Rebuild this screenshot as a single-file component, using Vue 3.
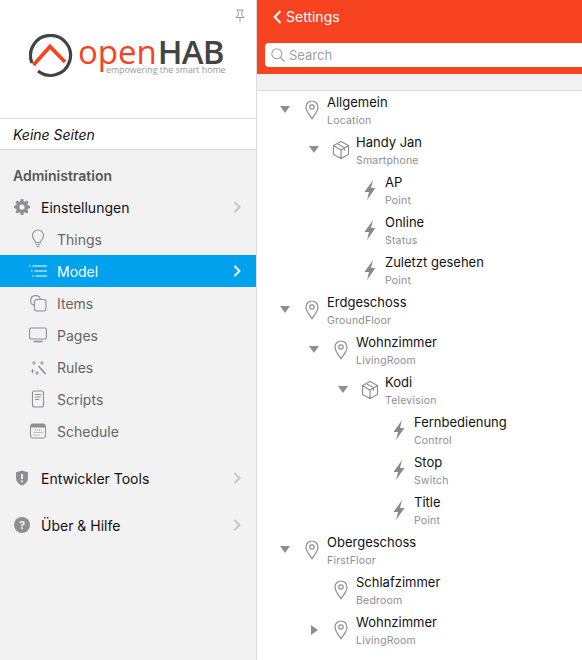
<template>
  <div class="app">
    <aside class="sidebar">
      <div class="logo-panel">
        <svg class="thumbtack" viewBox="0 0 12 14" width="12" height="14">
          <path d="M2.500 1h7M3.800 1l.5 5L2 8.500h8L7.700 6l.5-5M6 8.500v5" fill="none" stroke="#9a9a9a" stroke-width="1" />
        </svg>
        <div class="logo">
          <svg class="logo-mark" viewBox="0 0 44 44" width="44" height="44">
            <path d="M3 29A20 20 0 1 1 9 37" fill="none" stroke="#444" stroke-width="3.200" />
            <path d="M4.500 31L21 12.500 36 28" fill="none" stroke="#f7431f" stroke-width="3.800" />
          </svg>
          <div class="logo-text">
            <div class="logo-name"><span class="open">open</span><span class="hab">HAB</span></div>
            <div class="tagline">empowering the smart home</div>
          </div>
        </div>
      </div>
      <div class="pages">Keine Seiten</div>

      <div class="section-title">Administration</div>
      <div class="menu-row main">
        <svg class="main-icon" viewBox="0 0 16 16" width="16" height="16">
          <path fill="#8e8e93" fill-rule="evenodd" d="M6.700 0h2.600l.4 2.200 1.100.5 1.900-1.300 1.900 1.900-1.300 1.900.5 1.100 2.200.4v2.600l-2.200.4-.5 1.100 1.300 1.900-1.900 1.900-1.900-1.300-1.100.5-.4 2.200H6.700l-.4-2.200-1.100-.5-1.900 1.300-1.900-1.900 1.300-1.900-.5-1.100L0 9.300V6.700l2.200-.4.500-1.100-1.300-1.900 1.900-1.900 1.900 1.300 1.100-.5zM8 5.400a2.600 2.600 0 1 0 0 5.200 2.600 2.600 0 0 0 0-5.200z" />
        </svg>
        <span class="label">Einstellungen</span>
        <svg class="chev" viewBox="0 0 8 12" width="8" height="12"><path d="M1.500 1l5 5-5 5" fill="none" stroke="#c4c4c6" stroke-width="1.800" /></svg>
      </div>
      <div
        v-for="item in subItems"
        :key="item.name"
        class="menu-row sub"
        :class="{ active: item.name === 'Model' }"
      >
        <span class="sub-icon">
          <svg v-if="item.icon === 'bulb'" viewBox="0 0 18 20" width="18" height="20" fill="none" stroke="#8e8e93" stroke-width="1.100">
            <path d="M6.500 13.500c0-2-3-3.500-3-7a5.500 5.500 0 0 1 11 0c0 3.500-3 5-3 7zM6.800 15.500h4.400M7.500 17.500h3" />
          </svg>
          <svg v-else-if="item.icon === 'list'" viewBox="0 0 18 12" width="18" height="12" fill="none" stroke="#fff" stroke-width="1.100">
            <path d="M0 1h1.500M3.500 1H18M2 6h1.500M5.500 6H18M3 11h1.500M6.500 11H18" />
          </svg>
          <svg v-else-if="item.icon === 'items'" viewBox="0 0 18 18" width="18" height="18" fill="none" stroke="#8e8e93" stroke-width="1.100">
            <path d="M5.500 11.500a5 5 0 1 1 6-6" />
            <rect x="5.500" y="5.500" width="11.500" height="11.500" rx="2.500" />
          </svg>
          <svg v-else-if="item.icon === 'screen'" viewBox="0 0 18 16" width="18" height="16" fill="none" stroke="#8e8e93" stroke-width="1.100">
            <rect x="0.600" y="1" width="16.800" height="11" rx="1.500" />
            <path d="M4.500 14.500h9" stroke-width="1.600" />
          </svg>
          <svg v-else-if="item.icon === 'wand'" viewBox="0 0 18 18" width="18" height="18" fill="none" stroke="#8e8e93" stroke-width="1.100">
            <path d="M9.500 8l7 8" stroke-width="1.600" />
            <path d="M5 3v4M3 5h4M13 3v4M11 5h4M3.500 11v4M1.500 13h4M8 13v4M6 15h4" stroke-width="0.900" />
          </svg>
          <svg v-else-if="item.icon === 'doc'" viewBox="0 0 14 18" width="14" height="18" fill="none" stroke="#8e8e93" stroke-width="1.100">
            <rect x="1.500" y="1" width="11" height="16" rx="2" />
            <path d="M4 4.500h6M4 7h6M4 9.500h4" />
          </svg>
          <svg v-else viewBox="0 0 16 16" width="16" height="16">
            <rect x="0.500" y="1" width="15" height="14" rx="2" fill="none" stroke="#8e8e93" />
            <path d="M1 3a2 2 0 0 1 2-2h10a2 2 0 0 1 2 2v1.500H1z" fill="#8e8e93" />
            <path d="M5 7h6.500M3.500 9.500h9M3.500 12h6.500" stroke="#8e8e93" stroke-dasharray="1 1" fill="none" />
          </svg>
        </span>
        <span class="label">{{ item.name }}</span>
        <svg v-if="item.name === 'Model'" class="chev" viewBox="0 0 8 12" width="8" height="12"><path d="M1.500 1l5 5-5 5" fill="none" stroke="#fff" stroke-width="1.800" /></svg>
      </div>

      <div class="menu-row main dev">
        <svg class="main-icon" viewBox="0 0 16 16" width="16" height="16">
          <path fill="#8e8e93" d="M8 .500l6 1.800v5.700c0 3.500-2.500 6-6 7.500-3.500-1.500-6-4-6-7.500V2.300z" />
          <path d="M8 4v5M8 10.500v1.700" stroke="#f2f2f2" stroke-width="1.800" />
        </svg>
        <span class="label">Entwickler Tools</span>
        <svg class="chev" viewBox="0 0 8 12" width="8" height="12"><path d="M1.500 1l5 5-5 5" fill="none" stroke="#c4c4c6" stroke-width="1.800" /></svg>
      </div>
      <div class="menu-row main help">
        <span class="help-icon">?</span>
        <span class="label">Über &amp; Hilfe</span>
        <svg class="chev" viewBox="0 0 8 12" width="8" height="12"><path d="M1.500 1l5 5-5 5" fill="none" stroke="#c4c4c6" stroke-width="1.800" /></svg>
      </div>
    </aside>

    <main class="content">
      <header class="topbar">
        <div class="back">
          <svg viewBox="0 0 9 14" width="9" height="14"><path d="M7.500 1L1.700 7l5.800 6" fill="none" stroke="#fff" stroke-width="2" /></svg>
          <span>Settings</span>
        </div>
        <div class="search">
          <svg viewBox="0 0 14 14" width="14" height="14" fill="none" stroke="#a0a0a0" stroke-width="1.100">
            <circle cx="5.800" cy="5.800" r="5" />
            <path d="M9.500 9.500l4 4" />
          </svg>
          <span>Search</span>
        </div>
      </header>
      <div class="band"></div>
      <div class="tree">
        <div
          v-for="node in nodes"
          :key="node.id"
          class="node"
          :style="{ paddingLeft: node.level * 29 + 'px' }"
        >
          <span class="caret" :class="node.caret"></span>
          <span class="node-icon">
            <svg v-if="node.icon === 'pin'" viewBox="0 0 14 20" width="14" height="20" fill="none" stroke="#8e8e93" stroke-width="1.200">
              <path d="M7 18.800C5 15.500 1 11.500 1 7a6 6 0 0 1 12 0c0 4.500-4 8.500-6 11.800z" />
              <circle cx="7" cy="7" r="2.200" />
            </svg>
            <svg v-else-if="node.icon === 'box'" viewBox="0 0 18 20" width="18" height="20" fill="none" stroke="#8e8e93" stroke-width="1.200">
              <path d="M9 1.500l7.500 4v9L9 18.500l-7.500-4v-9zM1.500 5.500L9 10l7.500-4.500M9 10v8.500M5 3.500l7.500 4.300v2.700" />
            </svg>
            <svg v-else viewBox="0 0 12 20" width="12" height="20">
              <path fill="#8a8a8e" d="M9 0L.5 12H5L3 20l8.500-12H7z" />
            </svg>
          </span>
          <div class="node-text">
            <div class="node-name">{{ node.name }}</div>
            <div class="node-type">{{ node.type }}</div>
          </div>
        </div>
      </div>
    </main>
  </div>
</template>

<script setup>
const subItems = [
  { name: 'Things', icon: 'bulb' },
  { name: 'Model', icon: 'list' },
  { name: 'Items', icon: 'items' },
  { name: 'Pages', icon: 'screen' },
  { name: 'Rules', icon: 'wand' },
  { name: 'Scripts', icon: 'doc' },
  { name: 'Schedule', icon: 'cal' }
];

const rows = [
  [0, 'down', 'pin', 'Allgemein', 'Location'],
  [1, 'down', 'box', 'Handy Jan', 'Smartphone'],
  [2, '', 'bolt', 'AP', 'Point'],
  [2, '', 'bolt', 'Online', 'Status'],
  [2, '', 'bolt', 'Zuletzt gesehen', 'Point'],
  [0, 'down', 'pin', 'Erdgeschoss', 'GroundFloor'],
  [1, 'down', 'pin', 'Wohnzimmer', 'LivingRoom'],
  [2, 'down', 'box', 'Kodi', 'Television'],
  [3, '', 'bolt', 'Fernbedienung', 'Control'],
  [3, '', 'bolt', 'Stop', 'Switch'],
  [3, '', 'bolt', 'Title', 'Point'],
  [0, 'down', 'pin', 'Obergeschoss', 'FirstFloor'],
  [1, '', 'pin', 'Schlafzimmer', 'Bedroom'],
  [1, 'right', 'pin', 'Wohnzimmer', 'LivingRoom']
];

const nodes = rows.map((r, i) => ({
  id: i,
  level: r[0],
  caret: r[1],
  icon: r[2],
  name: r[3],
  type: r[4]
}));
</script>

<style>
body {
  margin: 0;
}
</style>

<style scoped>
.app {
  display: flex;
  width: 582px;
  height: 660px;
  overflow: hidden;
  font-family: Inter, "Liberation Sans", sans-serif;
  background: #fff;
}

.sidebar {
  width: 256px;
  flex-shrink: 0;
  background: #f2f2f2;
  border-right: 1px solid #dcdcdc;
}

.logo-panel {
  position: relative;
  height: 84px;
  background: #fff;
  border-bottom: 1px solid #d8d8d8;
  padding: 34px 0 0 29px;
}

.thumbtack {
  position: absolute;
  top: 9px;
  right: 10px;
}

.logo {
  display: flex;
  align-items: flex-start;
  gap: 5px;
}

.logo-text {
  padding-top: 6px;
}

.logo-name {
  font-family: "Open Sans", sans-serif;
  font-size: 33px;
  line-height: 24px;
  white-space: nowrap;
}

.open {
  color: #f7431f;
  font-weight: 500;
}

.hab {
  margin-left: 1px;
  color: #444;
  font-weight: 600;
  letter-spacing: -0.8px;
}

.tagline {
  margin-left: 28px;
  font-family: "Open Sans", sans-serif;
  font-size: 8.800px;
  line-height: 12px;
  color: #999;
  white-space: nowrap;
}

.pages {
  height: 30px;
  line-height: 31px;
  padding-left: 13px;
  background: #fff;
  border-bottom: 1px solid #d8d8d8;
  font-size: 14px;
  font-style: italic;
  color: #111;
}

.section-title {
  margin-top: 16px;
  padding-left: 13px;
  height: 20px;
  line-height: 20px;
  font-size: 14px;
  font-weight: 600;
  color: #555;
}

.menu-row {
  display: flex;
  align-items: center;
  height: 32px;
  padding-right: 15px;
  font-size: 14px;
}

.main {
  margin-top: 5px;
  padding-left: 14px;
  color: #111;
}

.main .label {
  margin-left: 11px;
}

.dev {
  margin-top: 15px;
}

.help {
  margin-top: 15px;
}

.sub {
  padding-left: 29px;
  color: #666;
}

.sub .label {
  margin-left: 10px;
}

.sub-icon {
  display: flex;
  align-items: center;
  justify-content: center;
  width: 18px;
  height: 20px;
}

.active {
  background: #00a1ed;
  color: #fff;
}

.chev {
  margin-left: auto;
}

.help-icon {
  width: 16px;
  height: 16px;
  border-radius: 50%;
  background: #8e8e93;
  color: #f2f2f2;
  font-size: 11px;
  font-weight: 700;
  line-height: 16px;
  text-align: center;
}

.content {
  flex: 1;
  min-width: 0;
}

.topbar {
  height: 74px;
  background: #f7431f;
  padding-left: 8px;
  box-sizing: border-box;
}

.back {
  display: flex;
  align-items: center;
  gap: 4px;
  height: 33px;
  padding-left: 8px;
  color: #fff;
  font-size: 14px;
}

.search {
  display: flex;
  align-items: center;
  gap: 4px;
  height: 24px;
  margin-top: 10px;
  padding-left: 6px;
  background: #fff;
  border-radius: 4px 0 0 4px;
  color: #a0a0a0;
  font-size: 13px;
}

.band {
  height: 16px;
  background: #f2f2f2;
  border-bottom: 1px solid #dcdcdc;
}

.node {
  display: flex;
  align-items: center;
  height: 40px;
  box-sizing: border-box;
  padding-bottom: 1px;
}

.caret {
  flex-shrink: 0;
  position: relative;
  width: 10px;
  height: 10px;
  margin: 0 13px 1px 23px;
}

.caret.down::before {
  content: "";
  position: absolute;
  left: 0;
  top: 1px;
  border-left: 5px solid transparent;
  border-right: 5px solid transparent;
  border-top: 7px solid #8e8e93;
}

.caret.right::before {
  content: "";
  position: absolute;
  left: 2px;
  top: 0;
  border-top: 5px solid transparent;
  border-bottom: 5px solid transparent;
  border-left: 7px solid #8e8e93;
}

.node-icon {
  display: flex;
  justify-content: center;
  width: 18px;
  flex-shrink: 0;
  margin-bottom: 1px;
}

.node-text {
  margin-left: 6px;
}

.node-name {
  font-size: 13px;
  line-height: 20px;
  color: #111;
}

.node-type {
  margin-top: 1px;
  font-size: 10.500px;
  line-height: 16px;
  color: #8e8e93;
  letter-spacing: 0.2px;
}
</style>
